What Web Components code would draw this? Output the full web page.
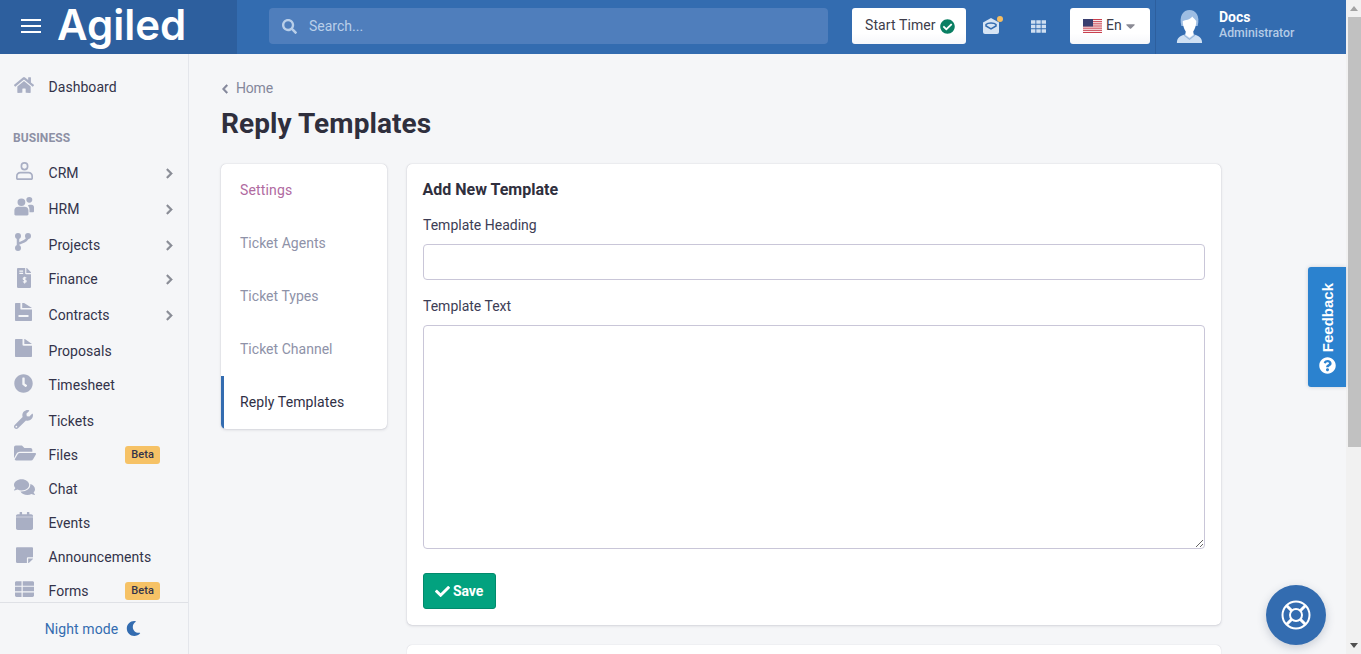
<!DOCTYPE html>
<html><head><meta charset="utf-8"><style>
html,body{margin:0;height:100%;overflow:hidden}
body{font-family:Roboto,"Noto Sans",sans-serif;background:#f5f6f8;color:#2f2f3d}
</style></head><body>
<app-shell></app-shell>
<script>
const P={
home:[576,'M280.37 148.26L96 300.11V464a16 16 0 0 0 16 16l112.06-.29a16 16 0 0 0 15.92-16V368a16 16 0 0 1 16-16h64a16 16 0 0 1 16 16v95.64a16 16 0 0 0 16 16.05L464 480a16 16 0 0 0 16-16V300L295.67 148.26a12.19 12.19 0 0 0-15.3 0zM571.6 251.47L488 182.56V44.05a12 12 0 0 0-12-12h-56a12 12 0 0 0-12 12v72.61L318.47 43a48 48 0 0 0-61 0L4.34 251.47a12 12 0 0 0-1.6 16.9l25.5 31A12 12 0 0 0 45.15 301l235.22-193.74a12.19 12.19 0 0 1 15.3 0L530.9 301a12 12 0 0 0 16.9-1.6l25.5-31a12 12 0 0 0-1.7-16.93z'],
check:[512,'M173.898 439.404l-166.4-166.4c-9.997-9.997-9.997-26.206 0-36.204l36.203-36.204c9.997-9.998 26.207-9.998 36.204 0L192 312.69 432.095 72.596c9.997-9.997 26.207-9.997 36.204 0l36.203 36.204c9.997 9.997 9.997 26.206 0 36.204l-294.4 294.401c-9.998 9.997-26.207 9.997-36.204-.001z'],
clock:[512,'M256,8C119,8,8,119,8,256S119,504,256,504,504,393,504,256,393,8,256,8Zm92.49,313h0l-20,25a16,16,0,0,1-22.49,2.5h0l-67-49.72a40,40,0,0,1-15-31.23V112a16,16,0,0,1,16-16h32a16,16,0,0,1,16,16V256l58,42.5A16,16,0,0,1,348.49,321Z'],
wrench:[512,'M507.73 109.1c-2.24-9.03-13.54-12.09-20.12-5.51l-74.36 74.36-67.88-11.31-11.31-67.88 74.36-74.36c6.62-6.62 3.43-17.9-5.66-20.16-47.38-11.74-99.55.91-136.58 37.93-39.64 39.64-50.55 97.1-34.05 147.2L18.74 402.76c-24.99 24.99-24.99 65.51 0 90.5 24.99 24.99 65.51 24.99 90.5 0l213.21-213.21c50.12 16.71 107.47 5.68 147.37-34.22 37.07-37.07 49.7-89.32 37.91-136.73zM64 472c-13.25 0-24-10.75-24-24 0-13.26 10.75-24 24-24s24 10.74 24 24c0 13.25-10.75 24-24 24z'],
folder:[576,'M572.694 292.093L500.27 416.248A63.997 63.997 0 0 1 444.989 448H45.025c-18.523 0-30.064-20.093-20.731-36.093l72.424-124.155A64 64 0 0 1 152 256h399.964c18.523 0 30.064 20.093 20.73 36.093zM152 224h328v-48c0-26.51-21.49-48-48-48H272l-64-64H48C21.49 64 0 85.49 0 112v278.046l69.077-118.418C86.214 242.25 117.989 224 152 224z'],
comments:[576,'M416 192c0-88.4-93.1-160-208-160S0 103.6 0 192c0 34.3 14.1 65.9 38 92-13.4 30.2-35.5 54.2-35.8 54.5-2.2 2.3-2.8 5.7-1.5 8.7S4.8 352 8 352c36.6 0 66.9-12.3 88.7-25 32.2 15.7 70.3 25 111.3 25 114.9 0 208-71.6 208-160zm122 220c23.9-26 38-57.7 38-92 0-66.9-53.5-124.2-129.3-148.1.9 6.6 1.3 13.3 1.3 20.1 0 105.9-107.7 192-240 192-10.8 0-21.3-.8-31.7-1.9C207.8 439.6 281.8 480 368 480c41 0 79.1-9.2 111.3-25 21.8 12.7 52.1 25 88.7 25 3.2 0 6.1-1.9 7.3-4.8 1.3-2.9.7-6.3-1.5-8.7-.3-.3-22.4-24.2-35.8-54.5z'],
calendar:[448,'M12 150h424c6.6 0 12 5.4 12 12v302c0 26.5-21.5 48-48 48H48c-26.5 0-48-21.5-48-48V162c0-6.6 5.4-12 12-12zM448 134v-22c0-26.5-21.500-48-48-48h-48V12c0-6.600-5.400-12-12-12h-40c-6.600 0-12 5.400-12 12v52H160V12c0-6.600-5.400-12-12-12h-40c-6.600 0-12 5.400-12 12v52H48C21.500 64 0 85.500 0 112v22z'],
note:[448,'M312 320h136V56c0-13.3-10.7-24-24-24H24C10.7 32 0 42.7 0 56v400c0 13.3 10.7 24 24 24h264V344c0-13.2 10.8-24 24-24zm129 55l-98 98c-4.5 4.5-10.6 7-17 7h-6V352h128v6.1c0 6.3-2.5 12.4-7 16.9z'],
moon:[512,'M283.211 512c78.962 0 151.079-35.925 198.857-94.792 7.068-8.708-.639-21.43-11.562-19.35-124.203 23.654-238.262-71.576-238.262-196.954 0-72.222 38.662-138.635 101.498-174.394 9.686-5.512 7.25-20.197-3.756-22.23A258.156 258.156 0 0 0 283.211 0c-141.309 0-256 114.511-256 256 0 141.309 114.511 256 256 256z'],
question:[512,'M504 256c0 136.997-111.043 248-248 248S8 392.997 8 256C8 119.083 119.043 8 256 8s248 111.083 248 248zM262.655 90c-54.497 0-89.255 22.957-116.549 63.758-3.536 5.286-2.353 12.415 2.715 16.258l34.699 26.31c5.205 3.947 12.621 3.008 16.665-2.122 17.864-22.658 30.113-35.797 57.303-35.797 20.429 0 45.698 13.148 45.698 32.958 0 14.976-12.363 22.667-32.534 33.976C247.128 238.528 216 254.941 216 296v4c0 6.627 5.373 12 12 12h56c6.627 0 12-5.373 12-12v-1.333c0-28.462 83.186-29.647 83.186-106.667 0-58.002-60.165-102-116.531-102zM256 338c-25.365 0-46 20.635-46 46 0 25.364 20.635 46 46 46s46-20.636 46-46c0-25.365-20.635-46-46-46z'],
checkc:[512,'M504 256c0 136.967-111.033 248-248 248S8 392.967 8 256 119.033 8 256 8s248 111.033 248 248zM227.314 387.314l184-184c6.248-6.248 6.248-16.379 0-22.627l-22.627-22.627c-6.248-6.249-16.379-6.249-22.628 0L216 308.118l-70.059-70.059c-6.248-6.248-16.379-6.248-22.628 0l-22.627 22.627c-6.248 6.248-6.248 16.379 0 22.627l104 104c6.249 6.25 16.379 6.25 22.628.001z'],
search:[512,'M505 442.7L405.3 343c-4.5-4.5-10.6-7-17-7H372c27.6-35.3 44-79.7 44-128C416 93.1 322.9 0 208 0S0 93.1 0 208s93.1 208 208 208c48.3 0 92.7-16.4 128-44v16.3c0 6.4 2.5 12.5 7 17l99.7 99.7c9.4 9.4 24.6 9.4 33.9 0l28.3-28.3c9.4-9.4 9.4-24.6.1-34zM208 336c-70.7 0-128-57.2-128-128 0-70.7 57.2-128 128-128 70.7 0 128 57.2 128 128 0 70.7-57.2 128-128 128z'],
right:[320,'M285.476 272.971L91.132 467.314c-9.373 9.373-24.569 9.373-33.941 0l-22.667-22.667c-9.357-9.357-9.375-24.522-.04-33.901L188.505 256 34.484 101.255c-9.335-9.379-9.317-24.544.04-33.901l22.667-22.667c9.373-9.373 24.569-9.373 33.941 0L285.475 239.03c9.373 9.372 9.373 24.568.001 33.941z'],
left:[320,'M34.52 239.03L228.87 44.69c9.37-9.37 24.57-9.37 33.94 0l22.67 22.67c9.36 9.36 9.37 24.52.04 33.9L131.49 256l154.02 154.75c9.34 9.38 9.32 24.54-.04 33.9l-22.67 22.67c-9.37 9.37-24.57 9.37-33.94 0L34.52 272.97c-9.37-9.37-9.37-24.57 0-33.94z'],
user:[512,'M256 0a120 120 0 1 1 0 240 120 120 0 0 1 0-240zm0 50a70 70 0 1 0 0 140 70 70 0 0 0 0-140zM130 280h252c72 0 130 50 130 120v60c0 30-22 52-52 52H52c-30 0-52-22-52-52v-60c0-70 58-120 130-120zm0 50c-46 0-80 30-80 70v60h412v-60c0-40-34-70-80-70z'],
friends:[512,'M190 40a100 100 0 1 1 0 200 100 100 0 0 1 0-200zM392 0a76 76 0 1 1 0 152 76 76 0 0 1 0-152zM110 262h160c64 0 100 44 100 96v110c0 18-14 32-32 32H42c-18 0-32-14-32-32V358c0-52 36-96 100-96zM400 210h50c36 0 62 30 62 66v110c0 16-12 28-28 28h-88v-66c0-52-14-92-40-122 10-10 26-16 44-16z'],
branch:[448,'',`<circle cx="84" cy="84" r="84"/><circle cx="364" cy="84" r="84"/><circle cx="84" cy="428" r="84"/><path fill="none" stroke="#a9afc4" stroke-width="70" d="M84 84V428M364 84C364 230 200 250 84 310"/>`],
invoice:[384,'M377 105L279 7c-4.5-4.5-10.6-7-17-7h-6v128h128v-6.1c0-6.3-2.5-12.4-7-16.9zM224 136V0H24C10.7 0 0 10.7 0 24v464c0 13.3 10.7 24 24 24h336c13.3 0 24-10.7 24-24V160H248c-13.2 0-24-10.8-24-24zM64 64h104v30H64zm0 60h104v30H64z',`<path fill="none" stroke="#f5f6f8" stroke-width="30" d="M252 262c-12-20-82-24-84 14-2 36 86 22 84 60-2 36-72 32-86 10M208 224v170"/>`],
contract:[448,'M0 20C0 9 9 0 20 0h122v160c0 14 12 26 26 26h280v306c0 11-9 20-20 20H20c-11 0-20-9-20-20zM190 0h50l208 140H190zM92 340v60h264v-60z'],
doc:[448,'M0 20C0 9 9 0 20 0h178v165c0 14 12 26 26 26h224v301c0 11-9 20-20 20H20c-11 0-20-9-20-20zM246 0h14l188 143H246z'],
grid:[512,'M0 40h150v120H0zM181 40h150v120H181zM362 40h150v120H362zM0 196h150v120H0zM181 196h150v120H181zM362 196h150v120H362zM0 352h150v120H0zM181 352h150v120H181zM362 352h150v120H362z'],
table:[512,'M0 72C0 50 18 32 40 32h136v128H0zM208 32h264c22 0 40 18 40 40v88H208zM0 192h176v128H0zM208 192h304v128H208zM0 352h176v128H40c-22 0-40-18-40-40zM208 352h304v88c0 22-18 40-40 40H208z'],
caret:[320,'M31.3 192h257.3c17.8 0 26.7 21.5 14.1 34.1L174.1 354.8c-7.8 7.8-20.5 7.8-28.3 0L17.2 226.1C4.6 213.5 13.5 192 31.3 192z']
};
const ic=(n,w,h,c,extra='')=>`<svg width="${w}" height="${h}" viewBox="0 0 ${P[n][0]} 512" preserveAspectRatio="none" fill="${c}" style="display:block;flex:none;${extra}"><path fill-rule="evenodd" d="${P[n][1]}"/>${P[n][2]||''}</svg>`;

class TopBar extends HTMLElement{constructor(){super();this.attachShadow({mode:'open'}).innerHTML=`<style>
:host{display:flex;height:54px;background:#336cb0;color:#fff;flex:none;align-items:center;padding-bottom:2px;box-sizing:border-box}
.brand{width:237px;height:54px;margin-bottom:-2px;background:#2d5f9e;display:flex;align-items:center;box-sizing:border-box;padding:0 0 2px 21px;gap:16px;flex:none}
.burger{display:flex;flex-direction:column;gap:4px;width:20px}.burger i{display:block;height:2px;background:#fff}
.logo{font:600 42px/44px Inter,sans-serif;margin-top:-3px}
.search{margin-left:32px;width:559px;height:36px;background:#4f7ebc;border-radius:4px;display:flex;align-items:center;padding-left:13px;box-sizing:border-box;gap:12px;color:#b9cfe9;font-size:14px;flex:none}
.btn{height:36px;background:linear-gradient(#fff 70%,#f6f7fa);border-radius:3px;box-sizing:border-box;display:flex;align-items:center;color:#3d3d4a;font-size:14px;flex:none}
.btn span{position:relative;top:-1px}
.timer{margin-left:24px;width:114px;padding-left:13px;gap:4px;letter-spacing:.1px}
.msg{margin-left:16px;width:18px;height:16px;position:relative;flex:none}
.dot{position:absolute;width:6px;height:6px;border-radius:50%;background:#f6bd60;right:-3px;top:-2px}
.grid{margin-left:31px;flex:none}
.lang{margin-left:24px;width:80px;padding-left:13px;gap:4px}
.user{margin-left:5px;margin-bottom:-2px;height:54px;padding-bottom:2px;box-sizing:border-box;border-left:1px solid #2d5f9e;flex:none;display:flex;align-items:center;padding-left:20px;gap:16px}
.u{margin-top:-2px}
.u b{display:block;font-size:14px;font-weight:700;line-height:16px}
.u span{display:block;font-size:12.3px;font-weight:500;color:#b4cbe6;line-height:16px}
</style>
<div class="brand"><div class="burger"><i></i><i></i><i></i></div><div class="logo">Agiled</div></div>
<div class="search">${ic('search',15,15,'#b9cfe9')}<span>Search...</span></div>
<div class="btn timer"><span>Start Timer</span>${ic('checkc',15,15,'#0a7f63')}</div>
<div class="msg"><svg width="18" height="16" viewBox="0 0 18 16"><path fill="#d6e4f4" d="M9 0l8 4.5V14a2 2 0 0 1-2 2H3a2 2 0 0 1-2-2V4.500z"/><path fill="none" stroke="#336cb0" stroke-width="1.500" d="M4 6.500C6 4.500 12 4.500 14 6.500V8l-5 3-5-3z"/></svg><span class="dot"></span></div>
<div class="grid">${ic('grid',15,15,'#d0dff1')}</div>
<div class="btn lang"><svg width="19" height="14" viewBox="0 0 19 14" style="flex:none"><rect width="19" height="14" fill="#fff"/><g fill="#c9414f"><rect width="19" height="1.100"/><rect y="2.150" width="19" height="1.100"/><rect y="4.300" width="19" height="1.100"/><rect y="6.450" width="19" height="1.100"/><rect y="8.600" width="19" height="1.100"/><rect y="10.750" width="19" height="1.100"/><rect y="12.900" width="19" height="1.100"/></g><rect width="10" height="7.500" fill="#3a3f70"/></svg><span>En</span>${ic('caret',9,14,'#8a8a94')}</div>
<div class="user"><svg width="27" height="34" viewBox="0 0 30 34" preserveAspectRatio="none"><path fill="#cfe0f3" d="M1 34c0-5 3-7 9-8.500l1-3h8l1 3c6 1.500 9 3.500 9 8.500z"/><path fill="#336cb0" d="M9 25.500l6 4 6-4 .5 1-6.500 4.500-6.500-4.500z" opacity=".35"/><path fill="#9dbde3" d="M6 17C3 7 8 1 15 1c7 0 12 6 9 16z"/><path fill="#fff" d="M7.500 12c3-1 8-1 10.500-4.500 1.500 1.500 3.500 3 4.500 4.500 0 6-3 12.500-7.500 12.500S7.500 18 7.500 12z"/><path fill="#fff" d="M11 22h8v4l-4 2.500-4-2.500z"/></svg><div class="u"><b>Docs</b><span>Administrator</span></div></div>`}}
customElements.define('top-bar',TopBar);

class NavItem extends HTMLElement{constructor(){super();const a=k=>this.getAttribute(k),i=a('icon'),w=+a('w')||20,ih=+a('ih')||18,d=a('dy')||0;
 this.attachShadow({mode:'open'}).innerHTML=`<style>
:host{display:flex;height:34px;flex:none;margin-top:${a('mt')||0}px;align-items:center;padding:0 15px 0 14px;box-sizing:border-box;font-size:14px;color:#33334a;letter-spacing:.05px}
.ic{width:34.5px;flex:none;display:flex;align-items:center;position:relative;top:${d}px}
.t{flex:1;position:relative;top:1px}
.b{background:#f6c266;color:#33334a;font-size:11px;font-weight:500;border-radius:3px;padding:0 6px;height:18px;line-height:18px;margin-right:13px;position:relative;top:1px}
</style><span class="ic">${ic(i,w,ih,'#a9afc4',a('ml')?'margin-left:'+a('ml')+'px':'')}</span><span class="t"><slot></slot></span>
${this.hasAttribute('arrow')?ic('right',7,11,'#8a8d96','position:relative;top:1px;stroke:#8a8d96;stroke-width:28'):''}${this.hasAttribute('beta')?'<span class="b">Beta</span>':''}`}}
customElements.define('nav-item',NavItem);

class SideBar extends HTMLElement{constructor(){super();this.attachShadow({mode:'open'}).innerHTML=`<style>
:host{display:flex;flex-direction:column;width:189px;box-sizing:border-box;border-right:1px solid #e4e6eb;background:#f5f6f8;flex:none;height:600px}
.list{flex:1;min-height:0;overflow:hidden;padding-top:15px}
.night{flex:none;height:52px;border-top:1px solid #dfe1e6;display:flex;align-items:center;justify-content:center;gap:8px;color:#336cb0;font-size:14px;letter-spacing:.1px;box-sizing:border-box;padding:0 2px 0 0}
</style><div class="list"><slot></slot></div><div class="night"><span>Night mode</span>${ic('moon',15,15,'#336cb0')}</div>`}}
customElements.define('side-bar',SideBar);

class SectionHead extends HTMLElement{constructor(){super();this.attachShadow({mode:'open'}).innerHTML=`<style>:host{display:block;font-size:12px;font-weight:700;color:#8d90a5;padding:0 13px;height:15px;line-height:15px;margin:28px 0 9px;letter-spacing:.1px}</style><slot></slot>`}}
customElements.define('section-head',SectionHead);

class SettingsMenu extends HTMLElement{constructor(){super();this.attachShadow({mode:'open'}).innerHTML=`<style>
:host{display:block;width:166px;flex:none;align-self:flex-start;background:#fff;border-radius:5px;box-shadow:0 0 1px rgba(60,60,90,.3),0 1px 3px rgba(60,60,90,.16);overflow:hidden;font-size:14px;letter-spacing:.02px}
div{height:53px;line-height:53px;padding-left:19px;color:#8e92a8;box-sizing:border-box}
.s{color:#b06a9f;letter-spacing:.15px}
.a{color:#2f2f45;border-left:3px solid #336cb0;padding-left:16px;letter-spacing:.12px}
</style><div class="s">Settings</div><div>Ticket Agents</div><div>Ticket Types</div><div>Ticket Channel</div><div class="a">Reply Templates</div>`}}
customElements.define('settings-menu',SettingsMenu);

class TemplateForm extends HTMLElement{constructor(){super();this.attachShadow({mode:'open'}).innerHTML=`<style>
:host{display:block;background:#fff;border-radius:5px;box-shadow:0 0 1px rgba(60,60,90,.3),0 1px 3px rgba(60,60,90,.16);padding:16px;box-sizing:border-box;height:461px;color:#2f2f3d}
h2{margin:0 0 0 -.5px;font-size:16px;font-weight:700;line-height:19px}
label{display:block;font-size:14px;line-height:17px;color:#3d3d55}
.l1{margin-top:18px}.l2{margin-top:18px}
input,textarea{display:block;width:100%;box-sizing:border-box;border:1px solid #c9c6d8;border-radius:4px;background:#fff;margin:10px 0 0;outline:none}
input{height:36px}textarea{height:224px;resize:vertical}
button{display:flex;align-items:center;gap:3px;margin-top:24px;height:36px;width:73px;box-sizing:border-box;background:#02a27f;border:1px solid #018a6c;border-radius:3px;color:#fff;font:700 14px Roboto,sans-serif;letter-spacing:-.1px;padding:0 0 0 11px}
</style><h2>Add New Template</h2><label class="l1">Template Heading</label><input><label class="l2">Template Text</label><textarea></textarea><button>${ic('check',15,15,'#fff')}<span>Save</span></button>`}}
customElements.define('template-form',TemplateForm);

class AppShell extends HTMLElement{constructor(){super();this.attachShadow({mode:'open'}).innerHTML=`<style>
:host{display:flex;height:654px;overflow:hidden;position:relative}
.page{flex:1;display:flex;flex-direction:column;min-width:0;height:654px;overflow:hidden}
.body{display:flex;flex:1;min-height:0}
main{flex:1;min-width:0;padding:26px 125px 0 32px;overflow:hidden;box-sizing:border-box}
.crumb{display:flex;align-items:center;gap:8px;font-size:14px;line-height:17px;color:#84879b;letter-spacing:-.2px;padding-left:1px}
h1{margin:5px 0 0;font-size:28px;line-height:44px;font-weight:700;color:#2f2f3d;height:44px;letter-spacing:.07px}
.cols{display:flex;gap:20px;margin-top:18px;align-items:flex-start}
.right{flex:1;min-width:0;display:flex;flex-direction:column;gap:20px}
.stub{height:60px;background:#fff;border-radius:5px;box-shadow:0 0 1px rgba(60,60,90,.3);flex:none}
.sb{width:15px;flex:none;background:#f1f1f1;display:flex;flex-direction:column;align-items:center}
.sb i{display:block;width:0;height:0;border:4px solid transparent;flex:none}
.up{border-bottom:5px solid #a3a3a3!important;border-top:0!important;margin-top:6px;margin-bottom:6px}
.th{width:13px;height:430px;background:#c1c1c1;flex:none;align-self:flex-end}
.sp{flex:1}
.dn{border-top:5px solid #505050!important;border-bottom:0!important;margin-bottom:6px}
.fb{position:absolute;left:1308px;top:267px;width:38px;height:120px;background:#2b82cf;color:#fff;border-radius:3px 0 0 3px;display:flex;flex-direction:column-reverse;align-items:center;padding:14px 0 13px;box-sizing:border-box;gap:5px;box-shadow:0 0 4px rgba(40,60,90,.2)}
.fb span{writing-mode:vertical-rl;transform:rotate(180deg);font:700 15px "Liberation Sans",sans-serif}
.help{position:absolute;left:1266px;top:585px;width:60px;height:60px;border-radius:50%;background:#336cb0;box-shadow:0 3px 10px rgba(40,60,90,.22);display:flex;align-items:center;justify-content:center}
</style>
<div class="page"><top-bar></top-bar><div class="body">
<side-bar>
<nav-item icon="home" w="20" ih="18" dy="-1">Dashboard</nav-item>
<section-head>BUSINESS</section-head>
<nav-item icon="user" w="17" ih="18" ml="2" arrow dy="-1">CRM</nav-item>
<nav-item icon="friends" w="20" ih="19" mt="2" arrow dy="-2">HRM</nav-item>
<nav-item icon="branch" w="16" ih="18" mt="2" arrow ml="1" dy="-2">Projects</nav-item>
<nav-item icon="invoice" w="14" ih="20" arrow ml="3" dy="0">Finance</nav-item>
<nav-item icon="contract" w="17" ih="18" mt="2" arrow ml="1" dy="-2">Contracts</nav-item>
<nav-item icon="doc" w="17" ih="18" mt="2" ml="1" dy="-2">Proposals</nav-item>
<nav-item icon="clock" w="19" ih="19" dy="-1">Timesheet</nav-item>
<nav-item icon="wrench" w="19" ih="19" mt="2" dy="-1">Tickets</nav-item>
<nav-item icon="folder" w="22" ih="20" beta dy="-1">Files</nav-item>
<nav-item icon="comments" w="21" ih="18" dy="-1">Chat</nav-item>
<nav-item icon="calendar" w="17" ih="18" ml="2" dy="-1">Events</nav-item>
<nav-item icon="note" w="17" ih="18" ml="2" dy="-1">Announcements</nav-item>
<nav-item icon="table" w="19" ih="18" ml="1" beta dy="-1">Forms</nav-item>
</side-bar>
<main>
<div class="crumb">${ic('left',6,10,'#84879b','stroke:#84879b;stroke-width:34')}<span>Home</span></div>
<h1>Reply Templates</h1>
<div class="cols"><settings-menu></settings-menu><div class="right"><template-form></template-form><div class="stub"></div></div></div>
</main></div></div>
<div class="sb"><i class="up"></i><div class="th"></div><div class="sp"></div><i class="dn"></i></div>
<div class="fb"><svg width="17" height="17" viewBox="0 0 512 512" fill="#fff" style="flex:none"><path fill-rule="evenodd" d="${P.question[1]}"/></svg><span>Feedback</span></div>
<div class="help"><svg width="30" height="30" viewBox="0 0 30 30" fill="none" stroke="#fff"><circle cx="15" cy="15" r="13.5" stroke-width="2"/><circle cx="15" cy="15" r="6" stroke-width="2"/><path stroke-width="3" d="M5.500 5.500l5.500 5.500M24.500 5.500l-5.500 5.500M5.500 24.500l5.500-5.500M24.500 24.500l-5.500-5.500"/></svg></div>`}}
customElements.define('app-shell',AppShell);
</script></body></html>
